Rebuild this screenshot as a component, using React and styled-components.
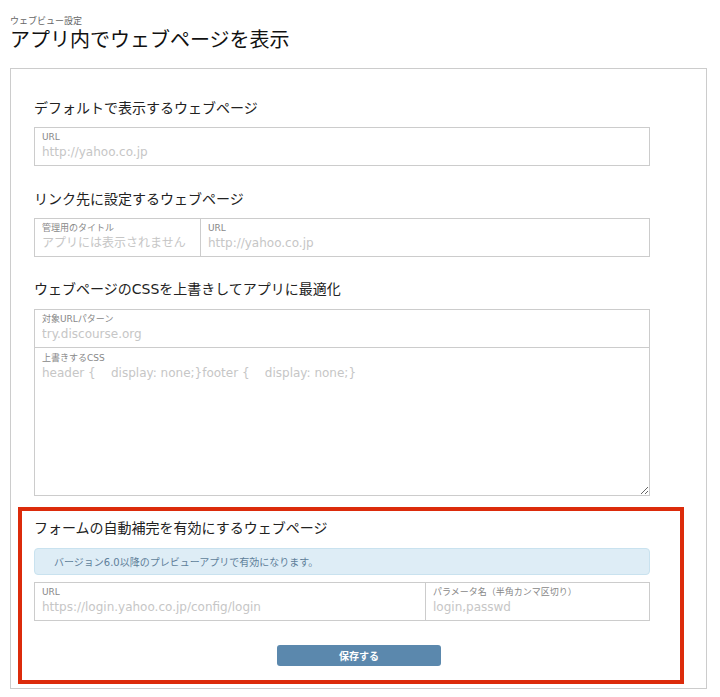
import React from "react";
import styled, { createGlobalStyle } from "styled-components";

const Global = createGlobalStyle`
  html, body { margin: 0; padding: 0; background: #fff; }
  body {
    font-family: "DejaVu Sans", "Noto Sans CJK JP", sans-serif;
    color: #222;
  }
  * { box-sizing: border-box; }
`;

const Page = styled.div`
  width: 720px;
  padding: 15px 13px 8px 10px;
`;

const SubLabel = styled.div`
  font-size: 9px;
  line-height: 12px;
  height: 12px;
  color: #666;
`;

const Title = styled.h1`
  margin: 0 0 15px;
  font-size: 20px;
  line-height: 26px;
  height: 26px;
  font-weight: normal;
  color: #111;
`;

const Panel = styled.div`
  border: 1px solid #ccc;
  padding: 29px 22px 4px 7px;
  display: flex;
  flex-direction: column;
`;

const Section = styled.section`
  padding: ${(p) => (p.$highlight ? "7px 30px 14px 12px" : "0 34px 0 16px")};
  border: ${(p) => (p.$highlight ? "4px solid #dc2b0b" : "none")};
  margin-bottom: ${(p) => p.$after ?? 0}px;
`;

const Heading = styled.h2`
  margin: 0 0 ${(p) => p.$gap ?? 9}px;
  height: 20px;
  font-size: 14px;
  line-height: 20px;
  font-weight: normal;
  color: #222;
`;

const FieldGroup = styled.div`
  border: 1px solid #ccc;
`;

const FieldRow = styled.div`
  display: grid;
  grid-template-columns: ${(p) => p.$cols || "1fr"};
  height: ${(p) => p.$height ?? 37}px;
  & + & { border-top: 1px solid #ccc; }
`;

const Cell = styled.label`
  display: flex;
  flex-direction: column;
  overflow: hidden;
  padding: ${(p) => (p.$flush ? "4px 0 0" : "3px 7px 0")};
  & + & { border-left: 1px solid #ccc; }
`;

const FieldLabel = styled.span`
  display: block;
  height: 12px;
  font-size: 9px;
  line-height: 12px;
  color: #888;
  padding: ${(p) => (p.$indent ? "0 7px" : "0")};
`;

const TextInput = styled.input`
  display: block;
  width: 100%;
  height: 18px;
  margin: 0;
  padding: 0;
  border: none;
  outline: none;
  background: transparent;
  font-family: inherit;
  font-size: 12px;
  line-height: 18px;
  color: #333;
  &::placeholder { color: #c6c6c6; opacity: 1; }
`;

const TextArea = styled.textarea`
  display: block;
  width: 100%;
  flex: 1;
  margin: 0;
  padding: 0 7px;
  border: none;
  outline: none;
  background: transparent;
  font-family: inherit;
  font-size: 12px;
  line-height: 18px;
  color: #333;
  white-space: pre;
  &::placeholder { color: #c6c6c6; opacity: 1; white-space: pre; }
`;

const Alert = styled.div`
  margin-bottom: 7px;
  padding: 0 19px;
  height: 27px;
  display: flex;
  align-items: center;
  background: #deedf6;
  border: 1px solid #c9e2ef;
  border-radius: 4px;
  font-size: 10px;
  color: #5f7f9a;
`;

const ButtonRow = styled.div`
  display: flex;
  justify-content: center;
  padding-left: 34px;
  margin-top: 24px;
`;

const SaveButton = styled.button`
  width: 164px;
  height: 21px;
  padding: 0;
  border: none;
  border-radius: 3px;
  background: #5b88ad;
  color: #fff;
  font-family: inherit;
  font-size: 10px;
  font-weight: bold;
  cursor: pointer;
`;

const cssPlaceholder = "header {    display: none;}footer {    display: none;}";

export default function App() {
  return (
    <>
      <Global />
      <Page>
        <SubLabel>ウェブビュー設定</SubLabel>
        <Title>アプリ内でウェブページを表示</Title>
        <Panel>
          <Section $after={23}>
            <Heading>デフォルトで表示するウェブページ</Heading>
            <FieldGroup>
              <FieldRow>
                <Cell>
                  <FieldLabel>URL</FieldLabel>
                  <TextInput placeholder="http://yahoo.co.jp" />
                </Cell>
              </FieldRow>
            </FieldGroup>
          </Section>

          <Section $after={22}>
            <Heading>リンク先に設定するウェブページ</Heading>
            <FieldGroup>
              <FieldRow $cols="165px 1fr">
                <Cell>
                  <FieldLabel>管理用のタイトル</FieldLabel>
                  <TextInput placeholder="アプリには表示されません" />
                </Cell>
                <Cell>
                  <FieldLabel>URL</FieldLabel>
                  <TextInput placeholder="http://yahoo.co.jp" />
                </Cell>
              </FieldRow>
            </FieldGroup>
          </Section>

          <Section $after={11}>
            <Heading $gap={10}>ウェブページのCSSを上書きしてアプリに最適化</Heading>
            <FieldGroup>
              <FieldRow>
                <Cell>
                  <FieldLabel>対象URLパターン</FieldLabel>
                  <TextInput placeholder="try.discourse.org" />
                </Cell>
              </FieldRow>
              <FieldRow $height={148}>
                <Cell $flush>
                  <FieldLabel $indent>上書きするCSS</FieldLabel>
                  <TextArea placeholder={cssPlaceholder} />
                </Cell>
              </FieldRow>
            </FieldGroup>
          </Section>

          <Section $highlight>
            <Heading $gap={10}>フォームの自動補完を有効にするウェブページ</Heading>
            <Alert>バージョン6.0以降のプレビューアプリで有効になります。</Alert>
            <FieldGroup>
              <FieldRow $cols="390px 1fr">
                <Cell>
                  <FieldLabel>URL</FieldLabel>
                  <TextInput placeholder="https://login.yahoo.co.jp/config/login" />
                </Cell>
                <Cell>
                  <FieldLabel>パラメータ名（半角カンマ区切り）</FieldLabel>
                  <TextInput placeholder="login,passwd" />
                </Cell>
              </FieldRow>
            </FieldGroup>
            <ButtonRow>
              <SaveButton type="button">保存する</SaveButton>
            </ButtonRow>
          </Section>
        </Panel>
      </Page>
    </>
  );
}
